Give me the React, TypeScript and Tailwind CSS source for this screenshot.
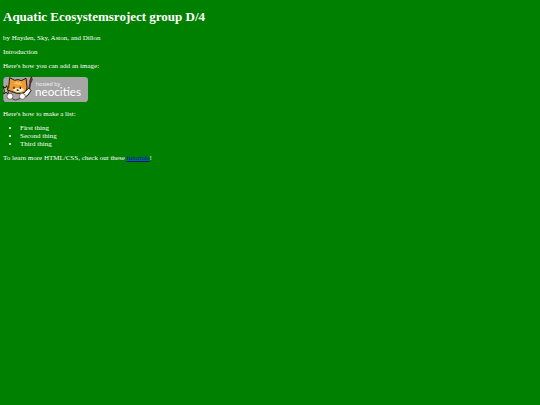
function NeocitiesBadge() {
  return (
    <svg className="block h-[25px] w-[85px] overflow-visible" viewBox="9 15 255 75" role="img" aria-label="Hosted by Neocities">
      <rect x="10" y="15" width="254" height="75" rx="10" fill="#a6a6a6" />
      <g stroke="#1c1710" strokeWidth="3" strokeLinejoin="round" strokeLinecap="round">
        <path d="M10 44 L16 48 L20 41 L23 50 L30 53 L24 58 L25 66 L18 61 L11 66 L13 57 Z" fill="#c8bda0" />
        <path d="M34 64 L42 57 L60 60 L70 66 L60 80 L46 84 L36 80 Z" fill="#a6a6a6" strokeWidth="2" />
        <path d="M68 66 L76 58 L87 48 L93 56 L84 69 L73 77 Z" fill="#fff" />
        <path d="M26 46 L29 17 L44 25 Q55 20 64 26 L78 19 L81 45 Q81 60 66 64 Q48 67 34 58 L22 54 Z" fill="#ef9a32" />
        <path d="M88 48 L91 31" stroke="#5b261d" strokeWidth="5" />
        <path d="M89 28 L94 14 L97 23 L94 30 Z" fill="#b5281c" strokeWidth="2" />
      </g>
      <path d="M38 54 Q46 45 53 49 Q65 44 73 54 Q65 62 51 61 Z" fill="#fff0d0" />
      <path d="M43 34 L66 37 M48 28 L52 34 M59 28 L60 34" stroke="#ffc562" strokeWidth="4" />
      <path d="M42 44 V50 M61 44 V51 M50 54 L56 55" stroke="#24190e" strokeWidth="4" />
      <g fill="#fff" stroke="#4a453c" strokeWidth="2">
        <circle cx="30" cy="73" r="9" />
        <circle cx="67" cy="73" r="9" />
      </g>
      <text x="107" y="42" fill="#f4f4f4" className="font-['Open_Sans',sans-serif] text-[16px]">hosted by</text>
      <text x="105" y="73" fill="#fff" className="font-['Lato',sans-serif] text-[35px]">neocities</text>
    </svg>
  );
}

export default function App() {
  return (
    <main className="flex min-h-screen flex-col gap-[6px] bg-[#008000] px-[3px] pt-[9px] font-['Liberation_Serif',serif] text-[7px] leading-[8px] text-white">
      <h1 className="mb-[3px] text-[13px] leading-[16px] font-bold">Aquatic Ecosystemsroject group D/4</h1>
      <p>by Hayden, Sky, Aston, and Dillon</p>
      <p>Introduction</p>
      <p>Here's how you can add an image:</p>
      <div className="pt-px pb-[2px]">
        <NeocitiesBadge />
      </div>
      <p>Here's how to make a list:</p>
      <ul className="list-disc pl-[17px]">
        <li>First thing</li>
        <li>Second thing</li>
        <li>Third thing</li>
      </ul>
      <p>
        To learn more HTML/CSS, check out these{" "}
        <a href="#tutorials" className="text-[#0000ee] underline">tutorials</a>!
      </p>
    </main>
  );
}
